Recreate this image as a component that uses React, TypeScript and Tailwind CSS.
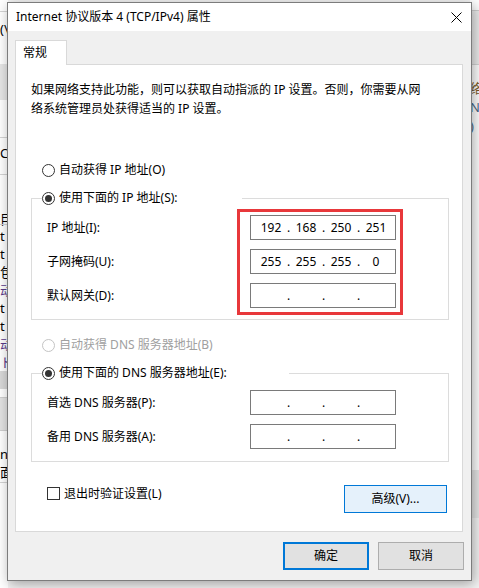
import React from 'react'

type RadioProps = { label: string; checked?: boolean; disabled?: boolean }

function Radio({ label, checked, disabled }: RadioProps) {
  return (
    <div className="flex items-center h-[18px] gap-[4px]">
      <span
        className={`w-[13px] h-[13px] rounded-full border bg-white flex items-center justify-center ${
          disabled ? 'border-[#c4c4c4]' : 'border-[#333333]'
        }`}
      >
        {checked && <span className="w-[7px] h-[7px] rounded-full bg-[#333333]" />}
      </span>
      <span className={disabled ? 'text-[#a0a0a0]' : 'text-black'}>{label}</span>
    </div>
  )
}

function IpBox({ parts }: { parts: string[] }) {
  return (
    <div className="w-[146px] h-[25px] border border-[#7a7a7a] bg-white flex items-center pl-[6px]">
      {parts.map((p, i) => (
        <React.Fragment key={i}>
          {i > 0 && <span className="w-[7px] text-center">.</span>}
          <span className="w-[28px] text-center">{p}</span>
        </React.Fragment>
      ))}
    </div>
  )
}

function Row({ label, parts }: { label: string; parts: string[] }) {
  return (
    <div className="flex items-center h-[25px]">
      <span className="w-[203px]">{label}</span>
      <IpBox parts={parts} />
    </div>
  )
}

function Group({ label, legendWidth, children }: { label: string; legendWidth: string; children: React.ReactNode }) {
  return (
    <div className="relative ml-[15px] w-[418px] border border-[#dcdcdc]">
      <div className={`-mt-[10px] ml-[10px] bg-white ${legendWidth}`}>
        <Radio label={label} checked />
      </div>
      {children}
    </div>
  )
}

const empty = ['', '', '', '']

export default function App() {
  return (
    <div className="relative w-[479px] h-[588px] overflow-hidden bg-[#f4f4f4] text-[12px] text-black font-['Noto_Sans','Noto_Sans_CJK_SC',sans-serif]">
      {/* window behind, left edge */}
      <div className="absolute left-0 top-0 w-[8px] h-full bg-white flex flex-col overflow-hidden leading-[18px] text-[13px]">
        <div className="h-[12px] border-b border-[#d4d4d4]" />
        <div className="h-[24px] pt-[10px] leading-[14px]">(\</div>
        <div className="h-[28px]" />
        <div className="h-[36px] bg-[#e6e6e6]" />
        <div className="h-[38px] border-b border-[#d4d4d4]" />
        <div className="h-[36px] pt-[6px]">CI</div>
        <div className="h-[50px] border-t border-[#d4d4d4] pt-[35px]">目</div>
        <div className="border-t border-[#d4d4d4] pt-[2px] flex flex-col">
          <span>t</span>
          <span>t</span>
          <span>包</span>
          <span className="text-[#5b3a8a]">动</span>
          <span>t</span>
          <span>t</span>
          <span className="text-[#5b3a8a]">动</span>
          <span className="text-[#5b3a8a]">ト</span>
        </div>
        <div className="h-[18px] bg-[#d8d8d8]" />
        <div className="h-[34px] mt-[8px] bg-[#e3e3e3] border-y border-[#cfcfcf]" />
        <div className="h-[52px] border-b border-[#d4d4d4] pt-[14px] leading-[18px]">
          n<br />面
        </div>
      </div>

      {/* window behind, right edge */}
      <div className="absolute right-0 top-0 w-[9px] h-full bg-white flex flex-col overflow-hidden text-[13px] leading-[19px]">
        <div className="h-[11px] border-b border-[#cfcfcf]" />
        <div className="h-[54px] bg-[#ececec] border-b border-[#d6d6d6]" />
        <div className="pt-[14px] text-[#7a5a2a]">络</div>
        <div className="text-[#4a6a8a]">NK</div>
        <div className="text-[#4a6a8a]">)</div>
        <div className="flex-1" />
        <div className="h-[48px] bg-[#e8e8e8]" />
        <div className="h-[70px] bg-[#f4f4f4]" />
      </div>

      {/* dialog window */}
      <div className="absolute left-[7px] top-[2px] w-[465px] h-[579px] border border-[#7c7c7c] bg-[#f0f0f0] shadow-[2px_3px_12px_rgba(0,0,0,0.35)] flex flex-col">
        <div className="h-[28px] bg-white flex items-center justify-between pl-[8px] pr-[9px]">
          <span>Internet 协议版本 4 (TCP/IPv4) 属性</span>
          <svg width="11" height="11" viewBox="0 0 11 11">
            <path d="M0.5 0.5 L10.5 10.5 M10.5 0.5 L0.5 10.5" stroke="#000" strokeWidth="1" />
          </svg>
        </div>

        <div className="mt-[9px] ml-[7px] flex">
          <div className="relative z-10 -mb-px h-[25px] w-[52px] bg-white border-t border-l border-r border-[#d9d9d9] flex items-center pl-[7px]">
            常规
          </div>
        </div>

        <div className="ml-[7px] w-[448px] h-[468px] border border-[#d9d9d9] bg-white flex flex-col">
          <p className="ml-[15px] mt-[15px] leading-[19px] whitespace-nowrap">
            如果网络支持此功能，则可以获取自动指派的 IP 设置。否则，你需要从网
            <br />
            络系统管理员处获得适当的 IP 设置。
          </p>

          <div className="mt-[43px] ml-[26px]">
            <Radio label="自动获得 IP 地址(O)" />
          </div>

          <div className="mt-[19px]">
            <Group label="使用下面的 IP 地址(S):" legendWidth="w-[200px]">
              <div className="mt-[8px] pl-[15px] pb-[11px] flex flex-col gap-[9px]">
                <Row label="IP 地址(I):" parts={['192', '168', '250', '251']} />
                <Row label="子网掩码(U):" parts={['255', '255', '255', '0']} />
                <Row label="默认网关(D):" parts={empty} />
              </div>
              <div className="absolute left-[205px] top-[10px] w-[166px] h-[106px] border-[3px] border-[#e8383b]" />
            </Group>
          </div>

          <div className="mt-[16px] ml-[26px]">
            <Radio label="自动获得 DNS 服务器地址(B)" disabled />
          </div>

          <div className="mt-[19px]">
            <Group label="使用下面的 DNS 服务器地址(E):" legendWidth="w-[247px]">
              <div className="mt-[8px] pl-[15px] pb-[12px] flex flex-col gap-[9px]">
                <Row label="首选 DNS 服务器(P):" parts={empty} />
                <Row label="备用 DNS 服务器(A):" parts={empty} />
              </div>
            </Group>
          </div>

          <div className="mt-[23px] flex justify-between items-start">
            <div className="ml-[31px] mt-[2px] h-[13px] flex items-center gap-[4px]">
              <span className="w-[13px] h-[13px] border border-[#333333] bg-white" />
              <span className="leading-[18px]">退出时验证设置(L)</span>
            </div>
            <button className="mr-[15px] w-[103px] h-[28px] border border-[#0078d7] bg-[#e5f1fb] flex items-center justify-center">
              高级(V)...
            </button>
          </div>
        </div>

        <div className="mt-[10px] pr-[7px] flex justify-end gap-[9px]">
          <button className="w-[86px] h-[28px] border-2 border-[#0078d7] bg-[#e1e1e1] flex items-center justify-center">
            确定
          </button>
          <button className="w-[86px] h-[28px] border border-[#adadad] bg-[#e1e1e1] flex items-center justify-center">
            取消
          </button>
        </div>
      </div>
    </div>
  )
}
